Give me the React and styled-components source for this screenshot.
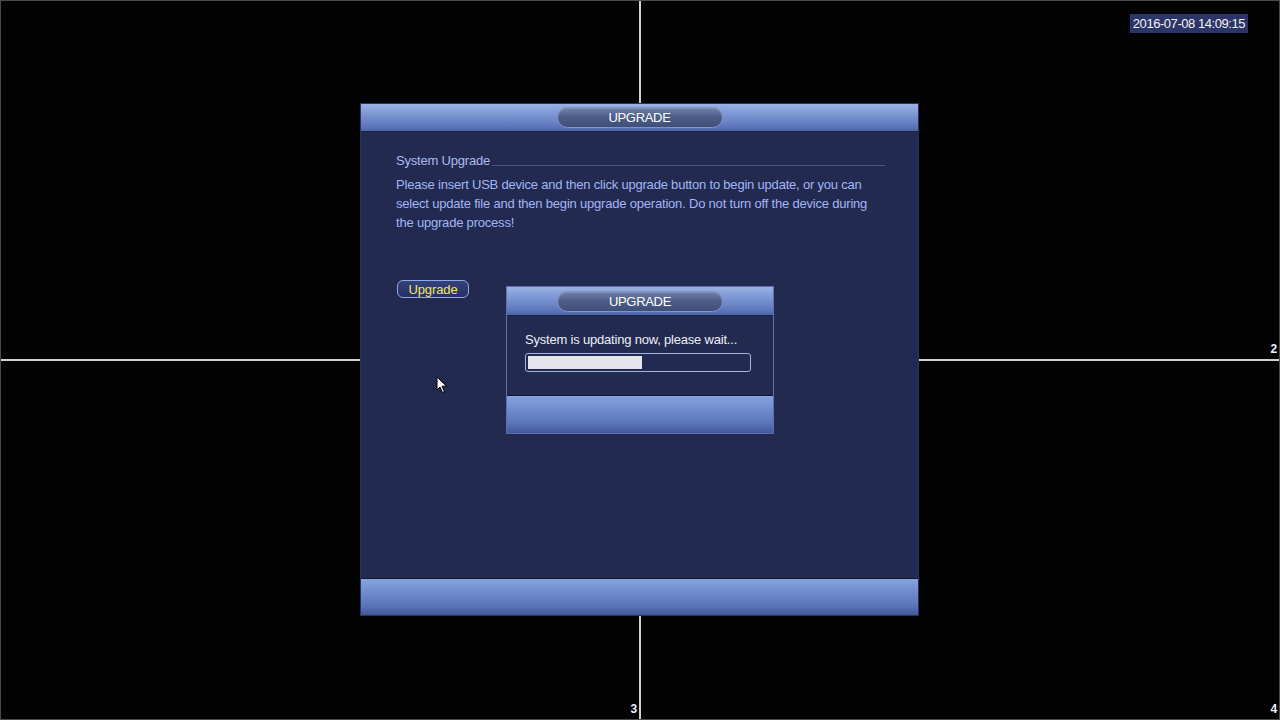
import React from 'react';
import styled, { createGlobalStyle } from 'styled-components';

const GlobalStyle = createGlobalStyle`
    html, body {
        margin: 0;
        padding: 0;
        background: #000;
        overflow: hidden;
    }
    * {
        box-sizing: border-box;
    }
`;

const Stage = styled.div`
    position: relative;
    width: 1280px;
    height: 720px;
    font-family: "Liberation Sans", Arial, sans-serif;
    letter-spacing: -0.2px;
`;

const Screen = styled.div`
    display: grid;
    grid-template-columns: 1fr 1fr;
    grid-template-rows: 1fr 1fr;
    gap: 2px;
    width: 100%;
    height: 100%;
    background: #cfcfcf;
    border: 1px solid #4a4a4a;
`;

const Channel = styled.div`
    position: relative;
    background: #020203;
`;

const ChannelNo = styled.span`
    position: absolute;
    right: 2px;
    bottom: 3px;
    color: #eef0ff;
    font-size: 12px;
    font-weight: bold;
`;

const Clock = styled.div`
    position: absolute;
    top: 14px;
    right: 32px;
    padding: 2px 3px;
    background: #2b3567;
    color: #f2f2f8;
    font-size: 13px;
    line-height: 15px;
    letter-spacing: -0.45px;
`;

const Window = styled.div`
    position: absolute;
    left: ${(p) => p.$x}px;
    top: ${(p) => p.$y}px;
    width: ${(p) => p.$w}px;
    height: ${(p) => p.$h}px;
    display: flex;
    flex-direction: column;
    background: #222a4f;
    border: 1px solid ${(p) => (p.$framed ? '#5d70ad' : '#2a3360')};
`;

const TitleBar = styled.div`
    height: ${(p) => p.$h}px;
    flex: none;
    display: flex;
    align-items: center;
    justify-content: center;
    background: linear-gradient(to bottom, #9bb1e4 0%, #7f99d4 35%, #6079bd 80%, #4f66a8 100%);
    border-bottom: 1px solid #1c2244;
`;

const TitlePill = styled.div`
    width: ${(p) => p.$w}px;
    height: 21px;
    border-radius: 11px;
    display: flex;
    align-items: center;
    justify-content: center;
    background: linear-gradient(to bottom, #6d7fa9 0%, #4c5d88 50%, #3f4f7a 100%);
    border: 1px solid #8193c0;
    box-shadow: inset 0 1px 0 rgba(255, 255, 255, 0.15);
    color: #ffffff;
    font-size: 13px;
    letter-spacing: -0.3px;
`;

const Body = styled.div`
    flex: 1;
    padding: ${(p) => p.$pad};
`;

const Footer = styled.div`
    height: ${(p) => p.$h}px;
    flex: none;
    background: linear-gradient(to bottom, #87a3de 0%, #7490d0 30%, #5a74b8 75%, #425999 100%);
    border-top: 1px solid #14193a;
`;

const SectionHead = styled.div`
    display: flex;
    align-items: flex-end;
    color: #abbaf0;
    font-size: 13px;
    line-height: 16px;
`;

const Rule = styled.div`
    flex: 1;
    margin: 0 0 3px 2px;
    border-bottom: 1px solid #4a5586;
`;

const Note = styled.p`
    margin: 6px 0 0;
    color: #a4b5f6;
    font-size: 13px;
    line-height: 19px;
`;

const PillButton = styled.button`
    display: block;
    margin: 48px 0 0 1px;
    width: 72px;
    height: 18px;
    padding: 0;
    border-radius: 6px;
    border: 1px solid #93a8e4;
    background: linear-gradient(to bottom, #34427a, #263165);
    color: #f4e46a;
    font-family: inherit;
    font-size: 13px;
    line-height: 15px;
    letter-spacing: -0.1px;
`;

const Status = styled.div`
    color: #eceef8;
    font-size: 13px;
    line-height: 16px;
`;

const Progress = styled.div`
    margin-top: 5px;
    width: 226px;
    height: 19px;
    padding: 2px;
    border: 1px solid #a2b3e2;
    border-radius: 3px;
    background: #232a50;
`;

const ProgressFill = styled.div`
    height: 100%;
    background: #e4e4ea;
`;

const Pointer = styled.svg`
    position: absolute;
    left: 436px;
    top: 376px;
`;

const App = () => {
    const done = 52;

    return (
        <>
            <GlobalStyle />
            <Stage>
                <Screen>
                    <Channel />
                    <Channel>
                        <ChannelNo>2</ChannelNo>
                    </Channel>
                    <Channel>
                        <ChannelNo>3</ChannelNo>
                    </Channel>
                    <Channel>
                        <ChannelNo>4</ChannelNo>
                    </Channel>
                </Screen>

                <Clock>2016-07-08 14:09:15</Clock>

                <Window $x={360} $y={103} $w={559} $h={513}>
                    <TitleBar $h={28}>
                        <TitlePill $w={166}>UPGRADE</TitlePill>
                    </TitleBar>
                    <Body $pad="21px 33px 0 35px">
                        <SectionHead>
                            System Upgrade
                            <Rule />
                        </SectionHead>
                        <Note>
                            Please insert USB device and then click upgrade button to begin update, or you can
                            select update file and then begin upgrade operation. Do not turn off the device during
                            the upgrade process!
                        </Note>
                        <PillButton>Upgrade</PillButton>
                    </Body>
                    <Footer $h={37} />
                </Window>

                <Window $x={506} $y={286} $w={268} $h={148} $framed>
                    <TitleBar $h={29}>
                        <TitlePill $w={166}>UPGRADE</TitlePill>
                    </TitleBar>
                    <Body $pad="16px 0 0 18px">
                        <Status>System is updating now, please wait...</Status>
                        <Progress>
                            <ProgressFill style={{ width: `${done}%` }} />
                        </Progress>
                    </Body>
                    <Footer $h={38} />
                </Window>

                <Pointer width="12" height="18" viewBox="0 0 12 18">
                    <path d="M1 1 L1 14 L4 11 L6.5 16.5 L8.5 15.6 L6 10.2 L10.5 10.2 Z" fill="#fff" stroke="#000" strokeWidth="1" />
                </Pointer>
            </Stage>
        </>
    );
};

export default App;
